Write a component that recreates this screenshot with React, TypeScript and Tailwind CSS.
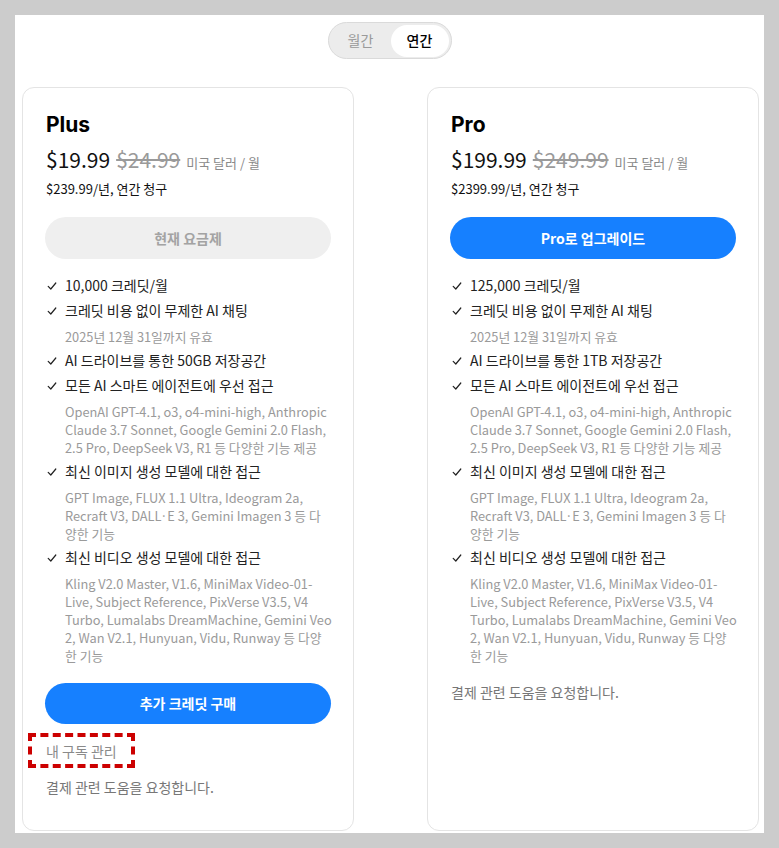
import React from "react";

const FONT = '"Noto Sans CJK KR", "Noto Sans", sans-serif';

function CheckIcon() {
  return (
    <svg width="10" height="10" viewBox="0 0 10 10" className="shrink-0">
      <path d="M1.2 5.4 L3.8 8 L8.8 2" fill="none" stroke="#222" strokeWidth="1.2" strokeLinecap="round" strokeLinejoin="round" />
    </svg>
  );
}

type Feature = { text: string; desc?: string[] };

const features = (storage: string): Feature[] => [
  { text: storage === "50GB" ? "10,000 크레딧/월" : "125,000 크레딧/월" },
  { text: "크레딧 비용 없이 무제한 AI 채팅", desc: ["2025년 12월 31일까지 유효"] },
  { text: `AI 드라이브를 통한 ${storage} 저장공간` },
  {
    text: "모든 AI 스마트 에이전트에 우선 접근",
    desc: [
      "OpenAI GPT-4.1, o3, o4-mini-high, Anthropic",
      "Claude 3.7 Sonnet, Google Gemini 2.0 Flash,",
      "2.5 Pro, DeepSeek V3, R1 등 다양한 기능 제공",
    ],
  },
  {
    text: "최신 이미지 생성 모델에 대한 접근",
    desc: [
      "GPT Image, FLUX 1.1 Ultra, Ideogram 2a,",
      "Recraft V3, DALL·E 3, Gemini Imagen 3 등 다",
      "양한 기능",
    ],
  },
  {
    text: "최신 비디오 생성 모델에 대한 접근",
    desc: [
      "Kling V2.0 Master, V1.6, MiniMax Video-01-",
      "Live, Subject Reference, PixVerse V3.5, V4",
      "Turbo, Lumalabs DreamMachine, Gemini Veo",
      "2, Wan V2.1, Hunyuan, Vidu, Runway 등 다양",
      "한 기능",
    ],
  },
];

function FeatureList({ storage }: { storage: string }) {
  return (
    <div className="mt-[14px] flex flex-col">
      {features(storage).map((f, i) => (
        <div key={i} className="flex flex-col">
          <div className="flex h-[25px] items-center text-[14px] text-[#222]">
            <div className="w-[20px] pl-[2px] flex items-center">
              <CheckIcon />
            </div>
            <span className="whitespace-nowrap">{f.text}</span>
          </div>
          {f.desc && (
            <div className="mt-[5px] mb-[2px] pl-[20px] text-[12.8px] leading-[18px] text-[#9a9a9a]">
              {f.desc.map((l, j) => (
                <div key={j} className="whitespace-nowrap">{l}</div>
              ))}
            </div>
          )}
        </div>
      ))}
    </div>
  );
}

function Card({
  name,
  price,
  old,
  yearly,
  storage,
  current,
}: {
  name: string;
  price: string;
  old: string;
  yearly: string;
  storage: string;
  current: boolean;
}) {
  return (
    <div className="w-[332px] shrink-0 rounded-[12px] border border-[#e4e4e4] bg-white px-[22px] pt-[22px] pb-[33px] flex flex-col">
      <div className="h-[30px] text-[21px] leading-[30px] font-bold text-black pl-[1px]" style={{ fontFamily: '"Inter", "Noto Sans CJK KR", sans-serif' }}>
        {name}
      </div>
      <div className="mt-[5px] flex items-baseline h-[28px] pl-[1px]">
        <span className="text-[21px] leading-[28px] text-[#111]">{price}</span>
        <span className="ml-[6px] text-[21px] leading-[28px] text-[#9a9a9a] line-through decoration-[1.5px]">{old}</span>
        <span className="ml-[6px] text-[13px] text-[#8a8a8a]">미국 달러 / 월</span>
      </div>
      <div className="mt-[6px] h-[20px] text-[13px] leading-[20px] text-[#111] pl-[1px]">{yearly}</div>
      {current ? (
        <div className="mt-[18px] flex h-[42px] items-center justify-center rounded-full bg-[#efefef] text-[14px] font-bold text-[#a3a3a3]">
          현재 요금제
        </div>
      ) : (
        <div className="mt-[18px] flex h-[42px] items-center justify-center rounded-full bg-[#1680ff] text-[14px] font-bold text-white">
          Pro로 업그레이드
        </div>
      )}
      <FeatureList storage={storage} />
      {current ? (
        <>
          <div className="mt-[16px] flex h-[41px] items-center justify-center rounded-full bg-[#1680ff] text-[14px] font-bold text-white">
            추가 크레딧 구매
          </div>
          <div className="relative mt-[17px] h-[20px] text-[14px] leading-[20px] text-[#8a8a8a] pl-[1px]">
            <span>내 구독 관리</span>
            <div className="absolute left-[-17px] top-[-8px] h-[35px] w-[107px] border-4 border-dashed border-[#cc0000]" />
          </div>
          <div className="mt-[16px] h-[20px] text-[14px] leading-[20px] text-[#777] pl-[1px]">결제 관련 도움을 요청합니다.</div>
        </>
      ) : (
        <div className="mt-[15px] h-[20px] text-[14px] leading-[20px] text-[#777] pl-[1px]">결제 관련 도움을 요청합니다.</div>
      )}
    </div>
  );
}

export default function App() {
  return (
    <div className="h-[848px] w-full bg-[#cccccc] p-[15px]" style={{ fontFamily: FONT }}>
      <div className="h-[818px] w-[749px] overflow-hidden bg-white">
        <div className="flex justify-center pt-[7px]">
          <div className="flex h-[37px] w-[124px] items-center rounded-full border border-[#dadada] bg-[#ececec] p-[2px]">
            <div className="flex-1 text-center text-[14px] text-[#9a9a9a]">월간</div>
            <div className="flex h-[32px] w-[58px] items-center justify-center rounded-full bg-white text-[14px] font-medium text-black">
              연간
            </div>
          </div>
        </div>
        <div className="mt-[28px] flex gap-[73px] pl-[7px]">
          <Card name="Plus" price="$19.99" old="$24.99" yearly="$239.99/년, 연간 청구" storage="50GB" current />
          <Card name="Pro" price="$199.99" old="$249.99" yearly="$2399.99/년, 연간 청구" storage="1TB" current={false} />
        </div>
      </div>
    </div>
  );
}
